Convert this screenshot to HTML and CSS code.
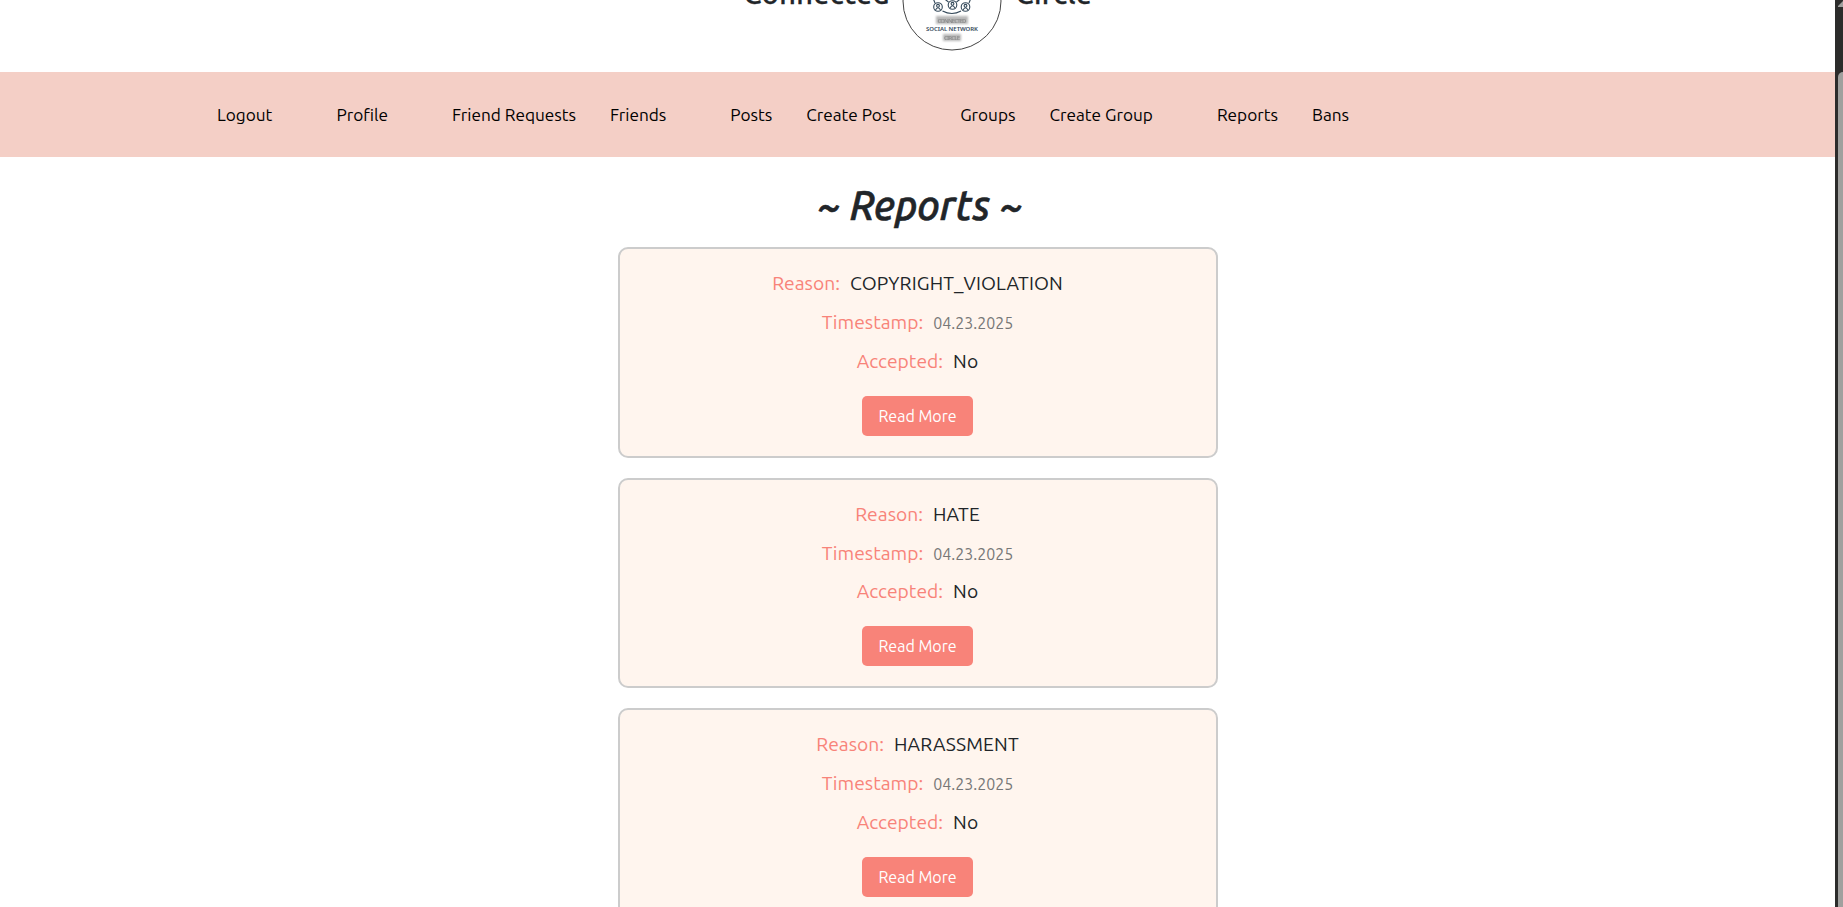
FILE: index.html
```html
<!DOCTYPE html>
<html lang="en">
<head>
<meta charset="utf-8">
<title>Connected Circle - Reports</title>
<link rel="stylesheet" href="styles.css">
</head>
<body>
<div class="page">
  <header class="brand">
    <span class="brand-word brand-left">Connected</span>
    <svg class="logo" viewBox="0 0 100 100" width="100" height="100">
      <circle cx="50" cy="50" r="49" fill="#fff" stroke="#444" stroke-width="1"/>
      <g fill="none" stroke="#34495a" stroke-width="1.1">
        <circle cx="36" cy="56" r="4.3"/><circle cx="50.500" cy="54" r="4.3"/><circle cx="63.500" cy="56" r="4.3"/>
        <circle cx="36" cy="54.8" r="1.4"/><circle cx="50.500" cy="52.8" r="1.4"/><circle cx="63.500" cy="54.8" r="1.4"/>
        <path d="M33.5 59q2.500-4.500 5 0M48 57q2.500-4.500 5 0M61 59q2.500-4.500 5 0M40.500 60q9.500 5 18.500 0M40 46l6.500 5M61 46l-6.500 5M31 47l2 5M69 47l-2 5M43 46q7 5 14 0"/>
      </g>
      <g class="logo-smudge"><rect x="34" y="65" width="32" height="8"/><rect x="41" y="83" width="18" height="7"/></g>
      <text class="logo-soft" x="50" y="71.500" textLength="29">CONNECTED</text>
      <text class="logo-text" x="50" y="80" textLength="52">SOCIAL NETWORK</text>
      <text class="logo-soft" x="50" y="89" textLength="16">CIRCLE</text>
    </svg>
    <span class="brand-word brand-right">Circle</span>
  </header>
  <nav class="nav">
    <div class="nav-group"><a>Logout</a></div>
    <div class="nav-group"><a>Profile</a></div>
    <div class="nav-group"><a>Friend Requests</a><a>Friends</a></div>
    <div class="nav-group"><a>Posts</a><a>Create Post</a></div>
    <div class="nav-group"><a>Groups</a><a>Create Group</a></div>
    <div class="nav-group"><a>Reports</a><a>Bans</a></div>
  </nav>
  <main class="reports">
    <h1 class="title">~ Reports ~</h1>
    <article class="card">
      <p class="row"><span class="label">Reason:</span><span class="value">COPYRIGHT_VIOLATION</span></p>
      <p class="row"><span class="label">Timestamp:</span><span class="date">04.23.2025</span></p>
      <p class="row"><span class="label">Accepted:</span><span class="value">No</span></p>
      <a class="button">Read More</a>
    </article>
    <article class="card">
      <p class="row"><span class="label">Reason:</span><span class="value">HATE</span></p>
      <p class="row"><span class="label">Timestamp:</span><span class="date">04.23.2025</span></p>
      <p class="row"><span class="label">Accepted:</span><span class="value">No</span></p>
      <a class="button">Read More</a>
    </article>
    <article class="card">
      <p class="row"><span class="label">Reason:</span><span class="value">HARASSMENT</span></p>
      <p class="row"><span class="label">Timestamp:</span><span class="date">04.23.2025</span></p>
      <p class="row"><span class="label">Accepted:</span><span class="value">No</span></p>
      <a class="button">Read More</a>
    </article>
  </main>
</div>
<div class="scrollbar"><svg class="arrow" width="5" height="7" viewBox="0 0 5 7"><path d="M0 7V6L5 1V7Z" fill="#a0a09e"/></svg><div class="thumb"></div></div>
</body>
</html>
```
FILE: styles.css
```css
* { box-sizing: border-box; }
body {
  margin: 0;
  height: 907px;
  overflow: hidden;
  display: flex;
  background: #fff;
  color: #212529;
  font-family: Ubuntu, "Noto Sans", sans-serif;
  font-size: 16px;
}
.page { width: 1835px; height: 907px; overflow: hidden; }
.brand { height: 72px; display: flex; align-items: flex-end; padding: 0 0 21px 743.5px; }
.brand-word { font-size: 28.8px; font-weight: 500; line-height: 40px; margin-bottom: 38px; letter-spacing: 0.45px; white-space: nowrap; -webkit-text-stroke: 0.3px #212529; }
.brand-left { width: 148px; }
.logo { flex: none; width: 100px; height: 100px; margin-left: 10.5px; }
.brand-right { margin-left: 13.5px; }
.logo text { font-family: "Noto Sans", sans-serif; text-anchor: middle; font-weight: 600; }
.logo-text { font-size: 6px; fill: #34495a; }
.logo .logo-soft { font-size: 6px; fill: #8c8c8c; filter: blur(0.4px); }
.logo-smudge { fill: #b8b8b8; filter: blur(1px); }
.nav { height: 85px; background: #f4cfc6; display: flex; gap: 64px; padding-left: 217px; align-items: center; color: #000; font-size: 17.22px; }
.nav-group { display: flex; gap: 34px; }
.nav a { white-space: nowrap; line-height: 24px; }
.reports { padding-top: 24px; display: flex; flex-direction: column; align-items: center; gap: 20px; }
.title { margin: 0 0 -1.7px; padding-left: 5px; font-size: 40.4px; font-weight: 500; font-style: italic; line-height: 48px; -webkit-text-stroke: 0.6px #212529; }
.card { width: 600px; height: 210.5px; flex: none; border: 2px solid #ccc; border-radius: 10px; background: #fff5ee; padding-top: 20px; display: flex; flex-direction: column; align-items: center; }
.row { margin: 0 0 10px; height: 28.8px; line-height: 28.8px; display: flex; align-items: baseline; gap: 10px; font-size: 19.25px; }
.label { color: #f88379; }
.value { letter-spacing: 0.12px; }
.date { font-size: 16px; color: #777; }
.button { width: 111px; height: 40px; margin-top: 10px; border-radius: 5px; background: #f88379; color: #fff; text-align: center; line-height: 40px; }
.scrollbar { width: 8px; height: 907px; background: #2c2c2b; padding-left: 3px; display: flex; flex-direction: column; overflow: hidden; }
.arrow { flex: none; display: block; }
.thumb { flex: 1; margin-top: 65px; background: #a0a09e; border-top-left-radius: 5px; }
```
